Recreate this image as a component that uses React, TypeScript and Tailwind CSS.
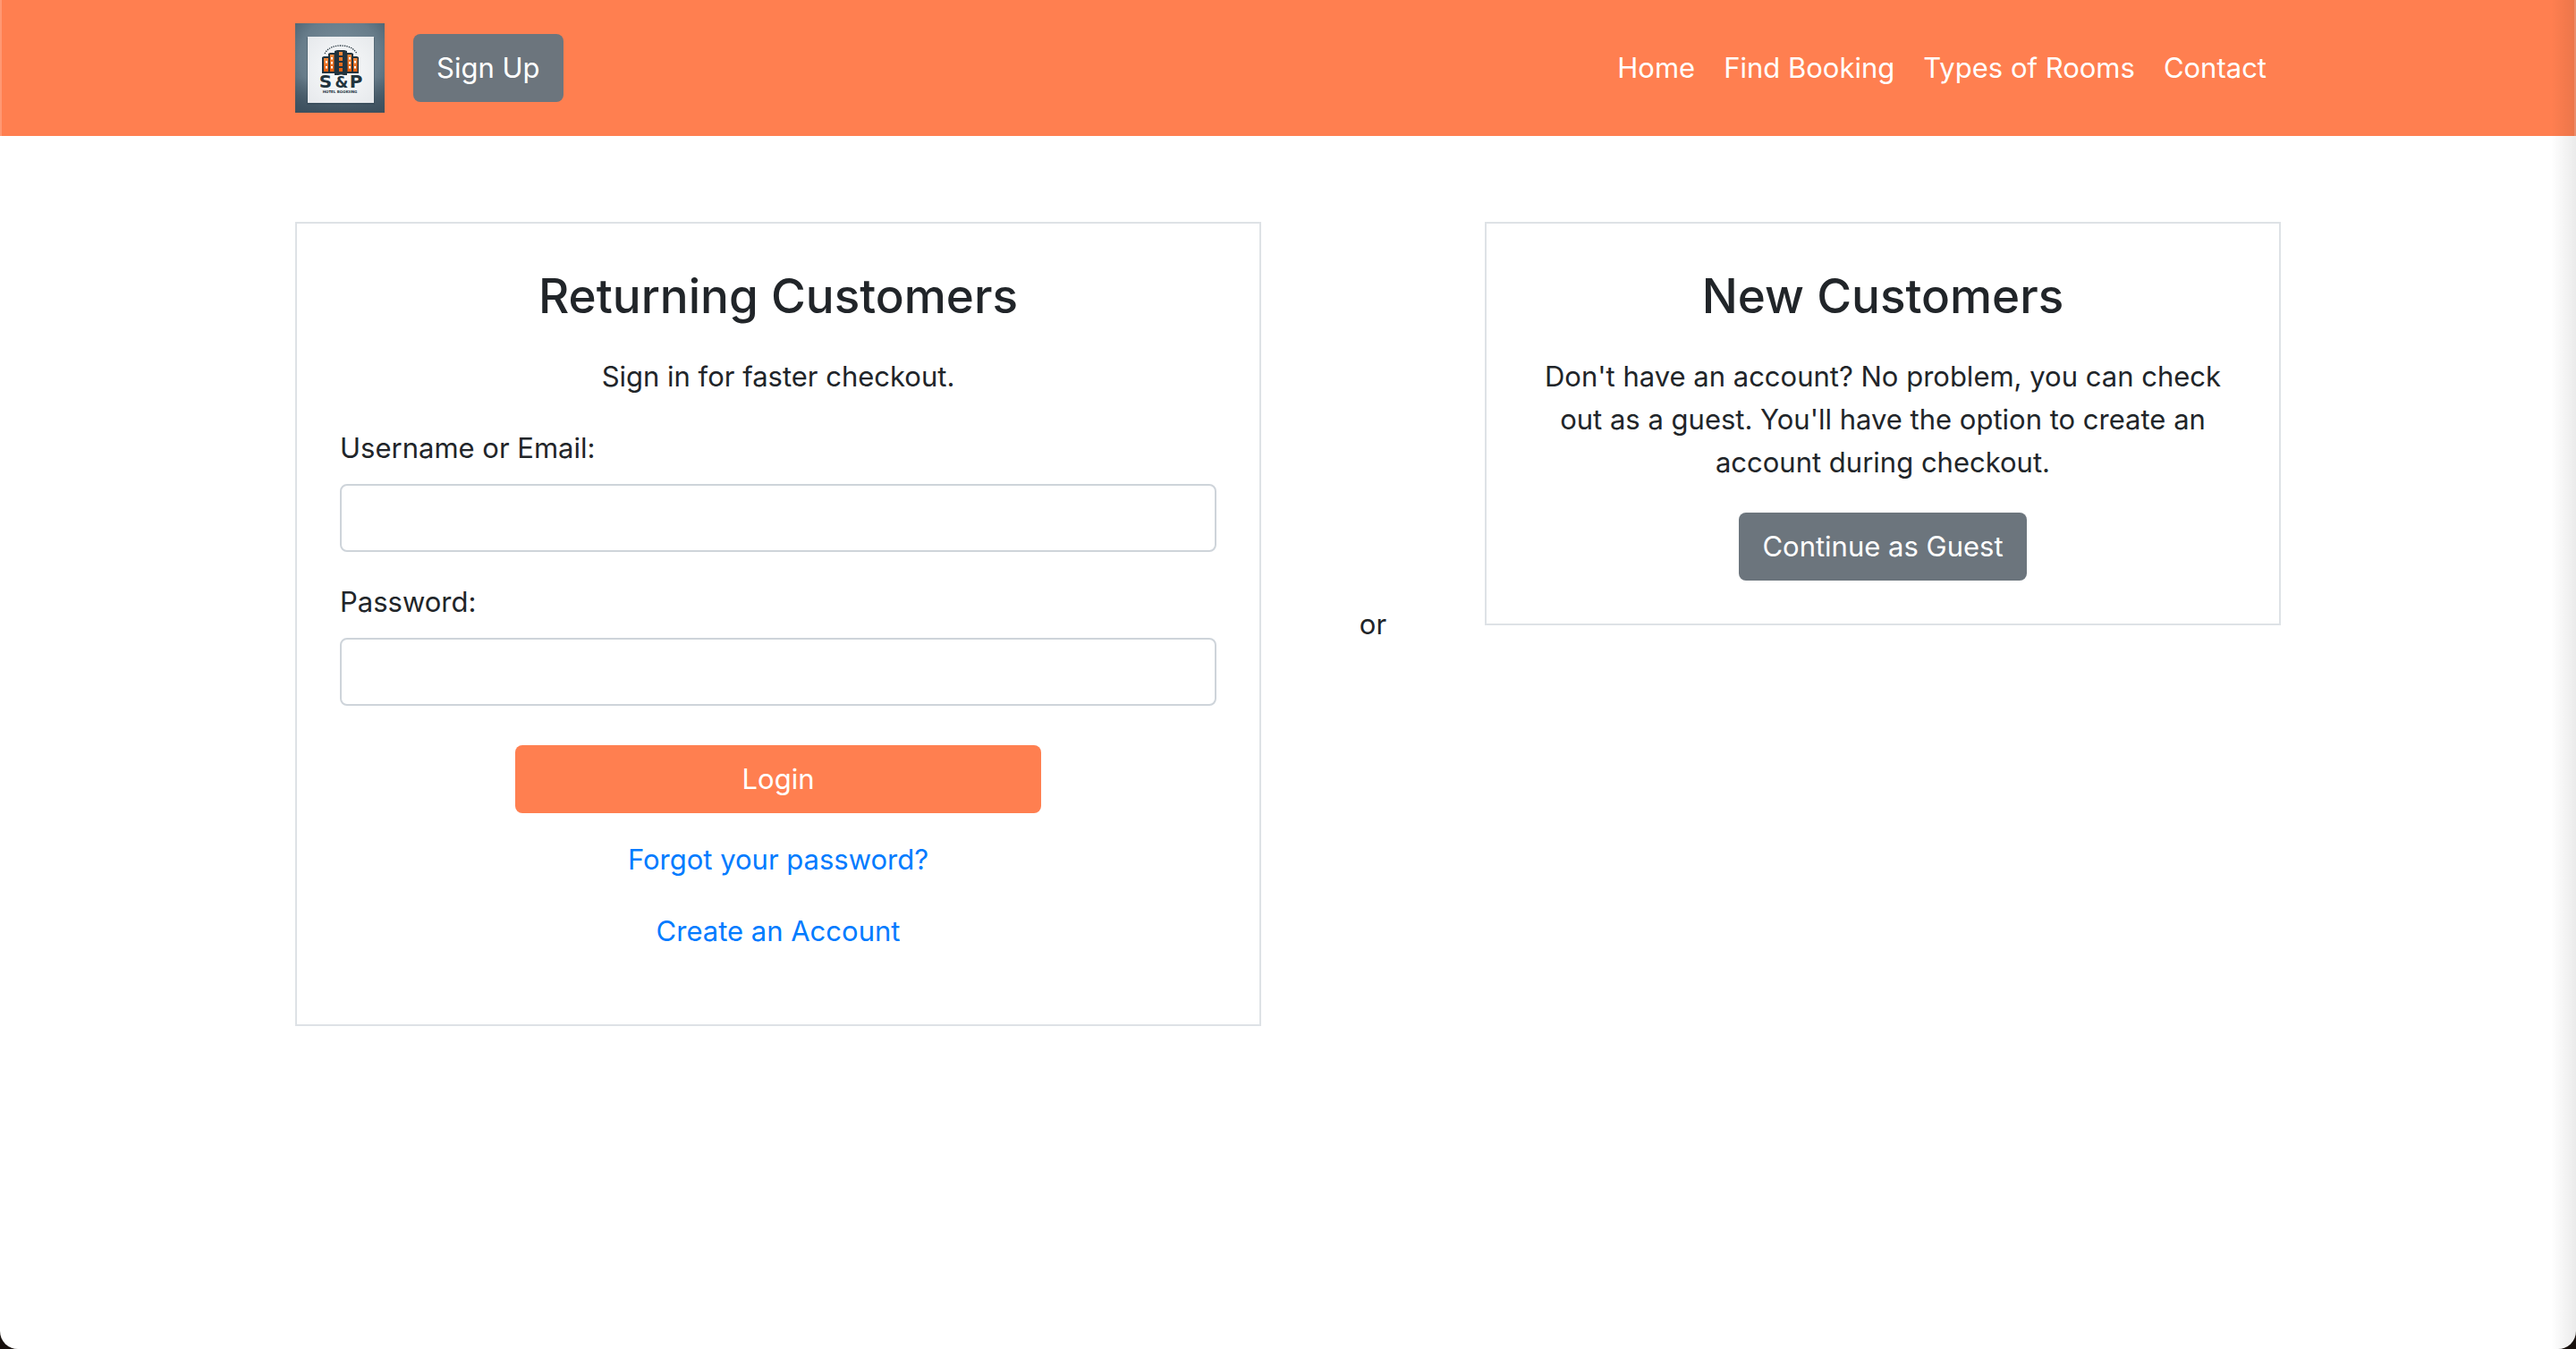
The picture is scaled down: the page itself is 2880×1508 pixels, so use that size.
const navLinks = ["Home", "Find Booking", "Types of Rooms", "Contact"];

function Logo() {
  return (
    <svg viewBox="0 0 100 100" className="size-[100px]" role="img" aria-label="S&P Hotel Booking">
      <defs>
        <radialGradient id="backdrop" cx="0.5" cy="0.38" r="0.75">
          <stop offset="0" stopColor="#7b919d" />
          <stop offset="0.6" stopColor="#677c8a" />
          <stop offset="1" stopColor="#435866" />
        </radialGradient>
        <linearGradient id="floor" x1="0" y1="0" x2="0" y2="1">
          <stop offset="0.6" stopColor="#3c4f5d" stopOpacity="0" />
          <stop offset="1" stopColor="#3c4f5d" stopOpacity="0.9" />
        </linearGradient>
        <radialGradient id="paper" cx="0.5" cy="0.5" r="0.7">
          <stop offset="0" stopColor="#fafbfc" />
          <stop offset="1" stopColor="#e6e9ec" />
        </radialGradient>
        <linearGradient id="brick" x1="0" y1="0" x2="0" y2="1">
          <stop offset="0" stopColor="#f58a3c" />
          <stop offset="1" stopColor="#e05a0c" />
        </linearGradient>
      </defs>
      <rect width="100" height="100" fill="url(#backdrop)" />
      <rect width="100" height="100" fill="url(#floor)" />
      <rect x="13" y="16" width="76" height="75" fill="#2f4250" opacity="0.35" />
      <rect x="14" y="15" width="74" height="74" fill="url(#paper)" />
      <path d="M33 34 Q38 25 51 25 Q64 25 69 34" fill="none" stroke="#27363f" strokeWidth="1.3" strokeDasharray="1.4 1.1" />
      <g fill="#22333d">
        <path d="M30 38 L32 37 H38 V56 H30 Z" />
        <path d="M37 34 L39 33 H45 V56 H37 Z" />
        <path d="M71 38 L69 37 H63 V56 H71 Z" />
        <path d="M65 34 L63 33 H57 V56 H65 Z" />
        <path d="M44 31 L47 30 H55 L58 31 V58 H44 Z" />
      </g>
      <g fill="url(#brick)">
        <path d="M32 39 H37 V54 H32 Z" />
        <path d="M39 35 H43.500 V54 H39 Z" />
        <path d="M58.500 35 H63 V54 H58.500 Z" />
        <path d="M65 39 H69.500 V54 H65 Z" />
        <path d="M49 32 h4 v4 h-4 Z M49 38 h4 v4 h-4 Z M49 44 h4 v4 h-4 Z M49 50 h4 v4 h-4 Z" />
      </g>
      <g fill="#ffffff">
        <path d="M34 42 h2 v2.500 h-2 Z M34 48 h2 v2.500 h-2 Z M40 38 h2 v2.500 h-2 Z M40 43 h2 v2.500 h-2 Z M40 48 h2 v2.500 h-2 Z" />
        <path d="M60 38 h2 v2.500 h-2 Z M60 43 h2 v2.500 h-2 Z M60 48 h2 v2.500 h-2 Z M66 42 h2 v2.500 h-2 Z M66 48 h2 v2.500 h-2 Z" />
      </g>
      <g
        fontFamily="'DejaVu Sans', sans-serif"
        fontWeight="700"
        fill="#22333d"
        textAnchor="middle"
        stroke="#f6f8f9"
        paintOrder="stroke"
      >
        <text x="34" y="72" fontSize="20" strokeWidth="2">S</text>
        <text x="68" y="72" fontSize="20" strokeWidth="2">P</text>
        <text x="52" y="72" fontSize="17" strokeWidth="3">&amp;</text>
        <text x="50" y="78" fontSize="4" strokeWidth="0">HOTEL BOOKIING</text>
      </g>
    </svg>
  );
}

function Field({ id, label, type }: { id: string; label: string; type: string }) {
  return (
    <div className="mb-8">
      <label htmlFor={id} className="mb-4 block text-left">
        {label}
      </label>
      <input
        id={id}
        type={type}
        className="block h-[76px] w-full rounded-lg border-2 border-[#ced4da] bg-white px-6 outline-none focus:border-[#80bdff]"
      />
    </div>
  );
}

export default function App() {
  return (
    <div className="min-h-screen bg-[#17100d]">
      <div className="relative min-h-screen overflow-hidden rounded-b-[20px] bg-white font-['Inter',sans-serif] text-[31px] leading-[48px] text-[#212529]">
        <header className="border-x-2 border-white/20 bg-[#ff7f50]">
          <div className="mx-auto flex max-w-[2280px] items-center justify-between px-[30px] py-[26px]">
            <div className="flex items-center gap-8">
              <a href="#home">
                <Logo />
              </a>
              <button type="button" className="h-[76px] rounded-lg bg-[#6c757d] px-[26px] text-white">
                Sign Up
              </button>
            </div>
            <nav className="flex">
              {navLinks.map((name) => (
                <a key={name} href="#nav" className="px-4 text-white">
                  {name}
                </a>
              ))}
            </nav>
          </div>
        </header>

        <main className="mx-auto mt-24 grid max-w-[2280px] grid-cols-12 text-center">
          <section className="col-span-6 mx-[30px] border-2 border-[#dee2e6] p-12">
            <h3 className="mb-8 text-[53px] leading-[67px] font-medium">Returning Customers</h3>
            <p className="mb-8">Sign in for faster checkout.</p>
            <form>
              <Field id="username" label="Username or Email:" type="text" />
              <Field id="password" label="Password:" type="password" />
              <button type="button" className="mt-3 h-[76px] w-3/5 rounded-lg bg-[#ff7f50] text-white">
                Login
              </button>
              <p className="mt-7 mb-8">
                <a href="#forgot" className="text-[#007bff]">Forgot your password?</a>
              </p>
              <p className="mb-8">
                <a href="#create" className="text-[#007bff]">Create an Account</a>
              </p>
            </form>
          </section>

          <p className="self-center">or</p>

          <section className="col-span-5 mx-[30px] self-start border-2 border-[#dee2e6] p-12">
            <h3 className="mb-8 text-[53px] leading-[67px] font-medium">New Customers</h3>
            <p className="mb-8">
              Don't have an account? No problem, you can check out as a guest. You'll have the option to create an
              account during checkout.
            </p>
            <button type="button" className="mx-auto block h-[76px] rounded-lg bg-[#6c757d] px-[26px] text-white">
              Continue as Guest
            </button>
          </section>
        </main>

        <div className="pointer-events-none absolute inset-y-0 right-0 w-7 bg-linear-to-r from-black/0 to-black/8" />
      </div>
    </div>
  );
}
